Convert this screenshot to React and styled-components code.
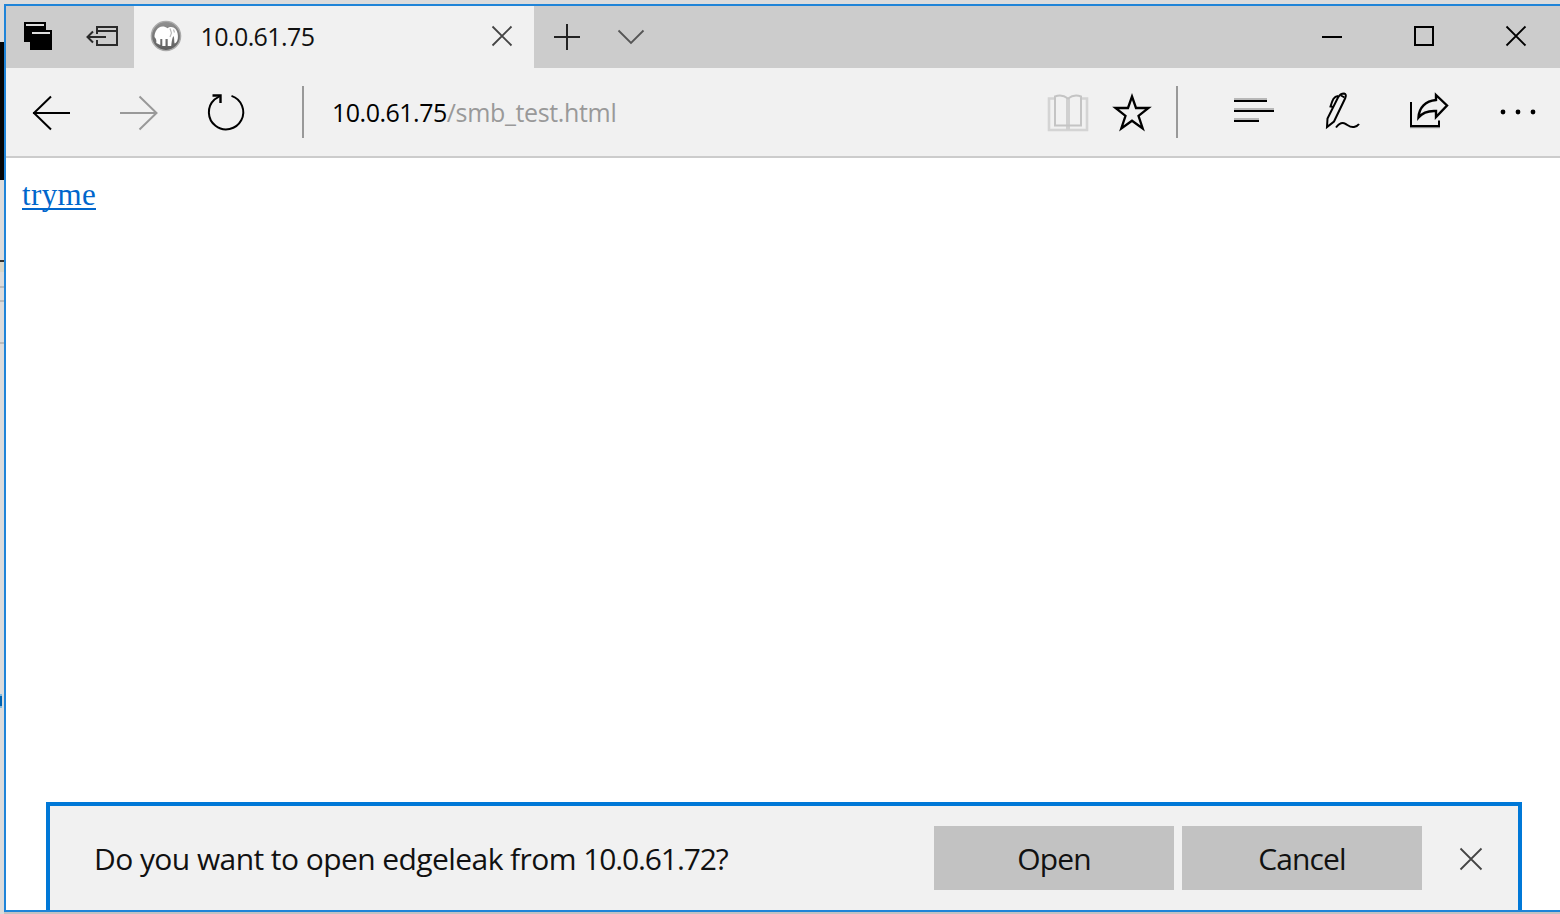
import React from 'react';
import styled, { createGlobalStyle } from 'styled-components';

const GlobalStyle = createGlobalStyle`
  *, *::before, *::after { box-sizing: border-box; }
  body { margin: 0; overflow: hidden; background: #dcdcdc; }
  #root { height: 914px; overflow: hidden; }
`;

const ui = `"Open Sans", "Noto Sans", sans-serif`;

const Desktop = styled.div`
  display: flex;
  width: 1562px;
  height: 914px;
`;

const Strip = styled.div`
  display: flex;
  flex-direction: column;
  width: 4px;
  flex: none;
`;

const Segment = styled.div`
  width: ${(p) => p.$w || 4}px;
  height: ${(p) => p.$h}px;
  background: ${(p) => p.$color};
`;

const Column = styled.div`
  display: flex;
  flex-direction: column;
  flex: 1;
  padding: 4px 0 2px;
  background: linear-gradient(#dcdcdc 0 50%, #c3c3c3 50% 100%);
`;

const Window = styled.main`
  display: flex;
  flex-direction: column;
  height: 908px;
  border: 2px solid #1f84d8;
  border-right: 0;
  background: #fff;
`;

const TabBar = styled.header`
  display: flex;
  height: 62px;
  flex: none;
  background: #ccc;
`;

const Tab = styled.div`
  display: flex;
  align-items: flex-start;
  width: 400px;
  background: #f1f1f1;
`;

const TabTitle = styled.span`
  flex: 1;
  padding-left: 2.5px;
  font: 25px/60px ${ui};
  letter-spacing: -0.58px;
  color: #111;
`;

const Spacer = styled.div`
  flex: 1;
`;

const Toolbar = styled.nav`
  display: flex;
  align-items: center;
  height: 90px;
  flex: none;
  background: #f1f1f1;
  border-bottom: 2px solid #ccc;
`;

const Divider = styled.span`
  width: 2px;
  height: 52px;
  margin: 0 ${(p) => p.$right}px 0 ${(p) => p.$left}px;
  background: #999;
`;

const Address = styled.div`
  flex: 1;
  font: 25px/88px ${ui};
  letter-spacing: -0.5px;
  color: #000;
`;

const Path = styled.span`
  color: #999;
  letter-spacing: -0.35px;
`;

const Button = styled.button`
  display: flex;
  flex: none;
  width: ${(p) => p.$w}px;
  height: ${(p) => p.$h}px;
  padding: 0;
  border: 0;
  background: transparent;
  color: ${(p) => p.$color || '#000'};
`;

const Glyph = styled.svg`
  display: block;
  width: 100%;
  height: 100%;
  fill: none;
  stroke: currentColor;
  stroke-width: 2;
`;

const Page = styled.section`
  flex: 1;
  padding: 18px 16px;
`;

const Link = styled.a`
  display: inline-block;
  height: 34px;
  border-bottom: 2px solid #0066cc;
  font: 31px/37px "Liberation Serif", serif;
  letter-spacing: 0.38px;
  color: #0066cc;
`;

const Prompt = styled.aside`
  display: flex;
  align-items: center;
  flex: none;
  width: 1476px;
  height: 108px;
  margin-left: 40px;
  padding: 0 0 0 44px;
  border: 4px solid #0078d7;
  border-bottom: 0;
  background: #f1f1f1;
`;

const Message = styled.p`
  flex: 1;
  margin: 0;
  padding-top: 2px;
  white-space: nowrap;
  font: 30px/64px ${ui};
  letter-spacing: -0.57px;
  color: #111;
`;

const Host = styled.span`
  letter-spacing: -1.12px;
`;

const Action = styled.button`
  width: 240px;
  height: 64px;
  margin-right: ${(p) => p.$gap}px;
  padding: 2px 0 0;
  border: 0;
  background: #c2c2c2;
  font: 30px/62px ${ui};
  letter-spacing: -0.9px;
  color: #111;
`;

function IconButton({ label, x, y, w, h, color, children }) {
  return (
    <Button aria-label={label} $w={w} $h={h} $color={color}>
      <Glyph viewBox={`${x} ${y} ${w} ${h}`}>{children}</Glyph>
    </Button>
  );
}

// Sliver of the desktop that shows to the left of the window: height, colour, width
const desktopSegments = [
  [42, '#dcdcdc'], [138, '#050505'], [80, '#dcdcdc'], [2, '#333'],
  [10, '#d8d6c8'], [14, '#dcdcdc'], [2, '#bbb'], [12, '#dcdcdc'], [2, '#bbb'],
  [40, '#dcdcdc'], [2, '#bbb'], [350, '#dcdcdc'], [2, '#79b9e3', 2],
  [10, '#0063b1', 2], [2, '#79b9e3', 2], [206, '#dcdcdc'],
];

function Favicon() {
  return (
    <Button as="span" $w={64} $h={62}>
      <Glyph viewBox="134 6 64 62">
        <defs>
          <linearGradient id="ring" x1="0" y1="0" x2="0" y2="1">
            <stop offset="0" stopColor="#919191" />
            <stop offset="1" stopColor="#5d5d5d" />
          </linearGradient>
        </defs>
        <circle cx="166" cy="36" r="14.6" fill="url(#ring)" stroke="#aaa" strokeWidth="1.4" />
        <path
          d="M154.500 37c0-5 3-10.500 8-10.500 2 0 3.500.5 5 1.800 2-2 6-1.800 8 .7 2 2.500 2.800 6 2.300 9.500-.4 3-1.800 4.500-3.300 5-.5-3 0-5.500-1-7.500-1.500 2-1.800 6-2.300 10h-3.500v-7h-2.200v7h-3.200v-7h-2v6l-4-2c.3-3-.2-4.500-1.800-6z"
          fill="#fff"
          stroke="none"
        />
        <path d="M170 28.500l1.500 4.500-1.500 4M173.500 29.500l1 3" stroke="#bbb" strokeWidth="1.200" />
      </Glyph>
    </Button>
  );
}

export default function App() {
  return (
    <>
      <GlobalStyle />
      <Desktop>
        <Strip>
          {desktopSegments.map(([h, color, w], i) => (
            <Segment key={i} $h={h} $color={color} $w={w} />
          ))}
        </Strip>
        <Column>
          <Window>
            <TabBar>
              <IconButton label="Tabs set aside" x={6} y={6} w={64} h={62}>
                <path d="M24 22h22v20H24zM30 30h22v20H30z" fill="#000" stroke="none" />
                <path d="M26 25h18M32 33h18" stroke="#ddd" />
              </IconButton>
              <IconButton label="Set these tabs aside" x={70} y={6} w={64} h={62} color="#2a2a2a">
                <path d="M97 34v-7h20v18H97v-5M97 31h20M87 37h19" />
                <path d="M93 31.500L87.500 37l5.500 5.500" />
              </IconButton>
              <Tab>
                <Favicon />
                <TabTitle>10.0.61.75</TabTitle>
                <IconButton label="Close tab" x={470} y={6} w={64} h={62} color="#444">
                  <path d="M492.500 26.500l19 19M511.500 26.500l-19 19" strokeWidth="1.8" />
                </IconButton>
              </Tab>
              <IconButton label="New tab" x={534} y={6} w={64} h={62} color="#222">
                <path d="M554 37h26M567 24v26" />
              </IconButton>
              <IconButton label="Tab previews" x={598} y={6} w={64} h={62} color="#555">
                <path d="M618.500 30.500L631 43l12.500-12.500" strokeWidth="1.8" />
              </IconButton>
              <Spacer />
              <IconButton label="Minimize" x={1286} y={6} w={92} h={62}>
                <path d="M1322 37h20" />
              </IconButton>
              <IconButton label="Maximize" x={1378} y={6} w={92} h={62}>
                <path d="M1415 27h18v18h-18z" />
              </IconButton>
              <IconButton label="Close" x={1470} y={6} w={92} h={62}>
                <path d="M1506.500 26.500l19 19M1525.500 26.500l-19 19" strokeWidth="1.800" />
              </IconButton>
            </TabBar>

            <Toolbar>
              <IconButton label="Back" x={6} y={68} w={88} h={88}>
                <path d="M33 113h37M51 96.500L34 113l17 16.500" />
              </IconButton>
              <IconButton label="Forward" x={94} y={68} w={88} h={88} color="#999">
                <path d="M120 113h37M139.500 96.500l17 16.500-17 16.500" />
              </IconButton>
              <IconButton label="Refresh" x={182} y={68} w={88} h={88}>
                <path d="M231.500 95.900A17.200 17.200 0 1 1 214.500 99.500L220 96" />
                <path d="M212.500 95.500h8v7.500" strokeWidth="2.400" />
              </IconButton>
              <Divider $left={32} $right={28} />
              <Address>
                10.0.61.75<Path>/smb_test.html</Path>
              </Address>
              <IconButton label="Reading view" x={1036} y={68} w={64} h={88} color="#c8c8c8">
                <path d="M1054 98.500h-5v31.500h38V98.500h-5" stroke="#d4d4d4" strokeWidth="2.600" />
                <path d="M1068 98v32" stroke="#d0d0d0" strokeWidth="4" />
                <path d="M1055 96.500c4-1.500 9-1 13 2 4-3 9-3.500 13-2v29h-26z" stroke="#c4c4c4" />
              </IconButton>
              <IconButton label="Favorites" x={1100} y={68} w={64} h={88}>
                <path d="M1132 96.500l4 11.500h12.500l-10 7.800 4.200 12.700-10.700-7.800-10.700 7.800 4.200-12.700-10-7.800h12.500z" strokeWidth="2.300" />
              </IconButton>
              <Divider $left={12} $right={32} />
              <IconButton label="Hub" x={1210} y={68} w={88} h={88}>
                <path d="M1234 99h33M1234 109h40M1234 119h25" stroke="#b8b8b8" />
                <path d="M1234 101h33M1234 111h40M1234 121h25" />
              </IconButton>
              <IconButton label="Make a web note" x={1298} y={68} w={88} h={88}>
                <path d="M1327 127l.5-8.500 10.500-21c1.500-2.500 3.500-4 6-4 2 .5 2.300 2 1.300 4.500l-11.300 23.500z" />
                <path d="M1341 95.500l3.500 2M1338 96c-4 .3-5.500 3.500-7.500 10.500l3 .5M1336 127.500c3-4 6.500-5.500 9.500-3.700s5 4 8.500 3.200c2.500-.5 3.500-.7 5-3" />
              </IconButton>
              <IconButton label="Share" x={1386} y={68} w={88} h={88}>
                <path d="M1410 127.200h30" stroke="#888" />
                <path d="M1411 102v24h28v-5.500" />
                <path d="M1436 95l11 10.500-11 11.500v-6c-8-.500-13 1-17.500 6.500.5-10 7-16.500 17.500-17.500z" strokeWidth="2.400" />
              </IconButton>
              <IconButton label="More" x={1474} y={68} w={88} h={88}>
                <g fill="#000" stroke="none">
                  <circle cx="1503" cy="112" r="2.400" />
                  <circle cx="1518" cy="112" r="2.400" />
                  <circle cx="1533" cy="112" r="2.400" />
                </g>
              </IconButton>
            </Toolbar>

            <Page>
              <Link>tryme</Link>
            </Page>

            <Prompt>
              <Message>
                Do you want to open edgeleak from <Host>10.0.61.72?</Host>
              </Message>
              <Action $gap={8}>Open</Action>
              <Action $gap={0}>Cancel</Action>
              <IconButton label="Dismiss" x={1422} y={826} w={96} h={64} color="#444">
                <path d="M1460.500 848.500l21 21M1481.500 848.500l-21 21" strokeWidth="1.800" />
              </IconButton>
            </Prompt>
          </Window>
        </Column>
      </Desktop>
    </>
  );
}
